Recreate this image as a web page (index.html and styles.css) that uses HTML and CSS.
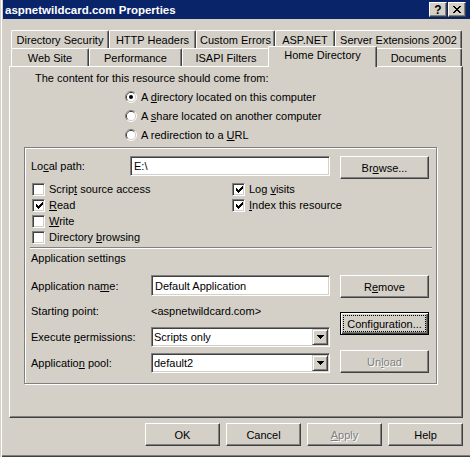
FILE: index.html
```html
<!DOCTYPE html>
<html>
<head>
<meta charset="utf-8">
<title>aspnetwildcard.com Properties</title>
<link rel="stylesheet" href="styles.css">
</head>
<body>
<div class="window">
  <div class="titlebar">
    <span class="title">aspnetwildcard.com Properties</span>
    <div class="caption-btns">
      <span class="cap-btn cap-help">?</span>
      <span class="cap-btn">
        <svg width="8" height="7" viewBox="0 0 8 7" shape-rendering="crispEdges"><path d="M0 0h2v1h-2zM6 0h2v1h-2zM1 1h2v1h-2zM5 1h2v1h-2zM2 2h4v1h-4zM3 3h2v1h-2zM2 4h4v1h-4zM1 5h2v1h-2zM5 5h2v1h-2zM0 6h2v1h-2zM6 6h2v1h-2z" fill="#000"/></svg>
      </span>
    </div>
  </div>

  <div class="tabs">
    <div class="tab-row">
      <div class="tab w-ds">Directory Security</div>
      <div class="tab w-http">HTTP Headers</div>
      <div class="tab w-err">Custom Errors</div>
      <div class="tab w-asp">ASP.NET</div>
      <div class="tab w-ext">Server Extensions 2002</div>
    </div>
    <div class="tab-row">
      <div class="tab w-web">Web Site</div>
      <div class="tab w-perf">Performance</div>
      <div class="tab w-isapi">ISAPI Filters</div>
      <div class="tab tab-selected w-home">Home Directory</div>
      <div class="tab w-docs">Documents</div>
    </div>
  </div>

  <div class="panel">
    <div class="intro">The content for this resource should come from:</div>
    <div class="radios">
      <div class="radio-row">
        <svg class="radio" width="12" height="12" viewBox="0 0 12 12"><path d="M2.11 9.89A5.5 5.5 0 0 1 9.89 2.11" fill="none" stroke="#808080"/><path d="M9.89 2.11A5.5 5.5 0 0 1 2.11 9.89" fill="none" stroke="#fff"/><path d="M2.82 9.18A4.5 4.5 0 0 1 9.18 2.82" fill="none" stroke="#404040"/><path d="M9.18 2.82A4.5 4.5 0 0 1 2.82 9.18" fill="none" stroke="#d4d0c8"/><circle cx="6" cy="6" r="4" fill="#fff"/><circle cx="6" cy="6" r="2" fill="#000"/></svg>
        <span>A <u>d</u>irectory located on this computer</span>
      </div>
      <div class="radio-row">
        <svg class="radio" width="12" height="12" viewBox="0 0 12 12"><path d="M2.11 9.89A5.5 5.5 0 0 1 9.89 2.11" fill="none" stroke="#808080"/><path d="M9.89 2.11A5.5 5.5 0 0 1 2.11 9.89" fill="none" stroke="#fff"/><path d="M2.82 9.18A4.5 4.5 0 0 1 9.18 2.82" fill="none" stroke="#404040"/><path d="M9.18 2.82A4.5 4.5 0 0 1 2.82 9.18" fill="none" stroke="#d4d0c8"/><circle cx="6" cy="6" r="4" fill="#fff"/></svg>
        <span>A <u>s</u>hare located on another computer</span>
      </div>
      <div class="radio-row">
        <svg class="radio" width="12" height="12" viewBox="0 0 12 12"><path d="M2.11 9.89A5.5 5.5 0 0 1 9.89 2.11" fill="none" stroke="#808080"/><path d="M9.89 2.11A5.5 5.5 0 0 1 2.11 9.89" fill="none" stroke="#fff"/><path d="M2.82 9.18A4.5 4.5 0 0 1 9.18 2.82" fill="none" stroke="#404040"/><path d="M9.18 2.82A4.5 4.5 0 0 1 2.82 9.18" fill="none" stroke="#d4d0c8"/><circle cx="6" cy="6" r="4" fill="#fff"/></svg>
        <span>A redirection to a <u>U</u>RL</span>
      </div>
    </div>

    <div class="group">
      <div class="path-row">
        <span class="lbl-path">Lo<u>c</u>al path:</span>
        <div class="edit path-edit">E:\</div>
        <div class="btn side-btn">Br<u>o</u>wse...</div>
      </div>

      <div class="checks">
        <div class="check"><span class="cb"></span><span>Scrip<u>t</u> source access</span></div>
        <div class="check"><span class="cb"><svg width="7" height="7" viewBox="0 0 7 7" shape-rendering="crispEdges"><path d="M0 2h1v3h-1zM1 3h1v3h-1zM2 4h1v3h-1zM3 3h1v3h-1zM4 2h1v3h-1zM5 1h1v3h-1zM6 0h1v3h-1z" fill="#000"/></svg></span><span>Log <u>v</u>isits</span></div>
        <div class="check"><span class="cb"><svg width="7" height="7" viewBox="0 0 7 7" shape-rendering="crispEdges"><path d="M0 2h1v3h-1zM1 3h1v3h-1zM2 4h1v3h-1zM3 3h1v3h-1zM4 2h1v3h-1zM5 1h1v3h-1zM6 0h1v3h-1z" fill="#000"/></svg></span><span><u>R</u>ead</span></div>
        <div class="check"><span class="cb"><svg width="7" height="7" viewBox="0 0 7 7" shape-rendering="crispEdges"><path d="M0 2h1v3h-1zM1 3h1v3h-1zM2 4h1v3h-1zM3 3h1v3h-1zM4 2h1v3h-1zM5 1h1v3h-1zM6 0h1v3h-1z" fill="#000"/></svg></span><span><u>I</u>ndex this resource</span></div>
        <div class="check"><span class="cb"></span><span><u>W</u>rite</span></div>
        <div></div>
        <div class="check"><span class="cb"></span><span>Directory <u>b</u>rowsing</span></div>
      </div>

      <div class="sep"></div>
      <div class="app-title">Application settings</div>

      <div class="app">
        <div class="app-fields">
          <div class="field-row r-name">
            <span class="lbl">Application na<u>m</u>e:</span>
            <div class="edit app-edit">Default Application</div>
          </div>
          <div class="field-row r-start">
            <span class="lbl">Starting point:</span>
            <span class="value">&lt;aspnetwildcard.com&gt;</span>
          </div>
          <div class="field-row r-exec">
            <span class="lbl">Execute <u>p</u>ermissions:</span>
            <div class="combo"><span class="combo-text">Scripts only</span><span class="drop"><svg width="7" height="4" viewBox="0 0 7 4" shape-rendering="crispEdges"><path d="M0 0h7v1h-1v1h-1v1h-1v1h-1v-1h-1v-1h-1v-1h-1z" fill="#000"/></svg></span></div>
          </div>
          <div class="field-row r-pool">
            <span class="lbl">Applicatio<u>n</u> pool:</span>
            <div class="combo"><span class="combo-text">default2</span><span class="drop"><svg width="7" height="4" viewBox="0 0 7 4" shape-rendering="crispEdges"><path d="M0 0h7v1h-1v1h-1v1h-1v1h-1v-1h-1v-1h-1v-1h-1z" fill="#000"/></svg></span></div>
          </div>
        </div>
        <div class="app-btns">
          <div class="btn side-btn">R<u>e</u>move</div>
          <div class="btn side-btn btn-default btn-config"><span class="focus">Confi<u>g</u>uration...</span></div>
          <div class="btn side-btn btn-disabled btn-unload">Un<u>l</u>oad</div>
        </div>
      </div>
    </div>
  </div>

  <div class="footer">
    <div class="btn foot-btn">OK</div>
    <div class="btn foot-btn">Cancel</div>
    <div class="btn foot-btn btn-disabled"><span><u>A</u>pply</span></div>
    <div class="btn foot-btn">Help</div>
  </div>
</div>
</body>
</html>
```

FILE: styles.css
```css
html, body {
  margin: 0;
  padding: 0;
  background: #d4d0c8;
}

body {
  font-family: "Liberation Sans", Arial, sans-serif;
  font-size: 11px;
  color: #000;
}

u {
  text-decoration: underline;
  text-underline-offset: 1px;
}

.window {
  width: 470px;
  height: 457px;
  box-sizing: border-box;
  background: #d4d0c8;
  display: flex;
  flex-direction: column;
  overflow: hidden;
  box-shadow: inset 1px 0 0 #d4d0c8, inset 2px 0 0 #fff, inset 0 -1px 0 #404040, inset 0 -2px 0 #808080;
}

/* Title bar */
.titlebar {
  height: 19px;
  flex: none;
  margin-left: 3px;
  padding-left: 2px;
  background: #0a246a;
  display: flex;
  align-items: center;
  color: #fff;
}

.title {
  font-weight: bold;
  font-size: 11.5px;
  white-space: nowrap;
}

.caption-btns {
  margin-left: auto;
  margin-right: 4px;
  display: flex;
  gap: 1px;
}

.cap-btn {
  width: 18px;
  height: 15px;
  box-sizing: border-box;
  background: #d4d0c8;
  border: 1px solid;
  border-color: #fff #404040 #404040 #fff;
  box-shadow: inset -1px -1px 0 #808080;
  display: flex;
  align-items: center;
  justify-content: center;
  color: #000;
}

.cap-help {
  font-weight: bold;
  font-size: 12px;
  line-height: 12px;
}

/* Tabs */
.tabs {
  flex: none;
  margin-top: 11px;
  padding-left: 11px;
}

.tab-row {
  display: flex;
  height: 18px;
}

.tab {
  box-sizing: border-box;
  height: 18px;
  flex: none;
  border-left: 1px solid #fff;
  border-top: 1px solid #fff;
  border-right: 1px solid #404040;
  border-radius: 2px 2px 0 0;
  box-shadow: inset -1px 0 0 #808080;
  background: #d4d0c8;
  text-align: center;
  line-height: 18px;
  white-space: nowrap;
}

.w-ds { width: 98px; }
.w-http { width: 87px; }
.w-err { width: 79px; }
.w-asp { width: 60px; }
.w-ext { width: 127px; }

.w-web { width: 78px; }
.w-perf { width: 93px; }
.w-isapi { width: 88px; }
.w-home { width: 105px; }
.w-docs { width: 87px; }

.tab-selected {
  position: relative;
  z-index: 2;
  width: 109px;
  height: 21px;
  margin: -2px -2px -1px;
  line-height: 17px;
}

/* Panel */
.panel {
  flex: none;
  margin-left: 9px;
  width: 454px;
  height: 352px;
  box-sizing: border-box;
  border-top: 1px solid #fff;
  border-left: 1px solid #fff;
  border-right: 1px solid #404040;
  border-bottom: 1px solid #404040;
  box-shadow: inset -1px -1px 0 #808080;
  display: flex;
  flex-direction: column;
}

.intro {
  margin: 5px 0 0 25px;
  line-height: 13px;
}

.radios {
  margin: 2px 0 0 115px;
}

.radio-row {
  display: flex;
  align-items: center;
  height: 19px;
}

.radio {
  flex: none;
  margin-right: 4px;
}

/* Group box */
.group {
  margin: 3px 0 0 14px;
  width: 413px;
  height: 237px;
  box-sizing: border-box;
  border: 1px solid #808080;
  box-shadow: inset 1px 1px 0 #fff, 1px 1px 0 #fff;
}

.path-row {
  display: flex;
  margin: 8px 0 0 6px;
  height: 23px;
}

.lbl-path {
  width: 99px;
  line-height: 20px;
}

.edit {
  box-sizing: border-box;
  background: #fff;
  border: 1px solid;
  border-color: #808080 #fff #fff #808080;
  box-shadow: inset 1px 1px 0 #404040, inset -1px -1px 0 #d4d0c8;
  padding-left: 3px;
  display: flex;
  align-items: center;
  white-space: nowrap;
}

.path-edit {
  width: 200px;
  height: 20px;
  margin-right: 10px;
}

.btn {
  box-sizing: border-box;
  background: #d4d0c8;
  border: 1px solid;
  border-color: #fff #404040 #404040 #fff;
  box-shadow: inset -1px -1px 0 #808080;
  display: flex;
  align-items: center;
  justify-content: center;
  white-space: nowrap;
}

.side-btn {
  width: 89px;
  height: 23px;
  flex: none;
}

.btn-default {
  border-color: #000;
  box-shadow: inset 1px 1px 0 #fff, inset -1px -1px 0 #404040, inset -2px -2px 0 #808080;
}

.focus {
  flex: 1;
  align-self: stretch;
  margin: 2px;
  border: 1px dotted #000;
  display: flex;
  align-items: center;
  justify-content: center;
}

.btn-disabled {
  color: #808080;
  text-shadow: 1px 1px 0 #fff;
}

.checks {
  display: grid;
  grid-template-columns: 200px 200px;
  grid-auto-rows: 16px;
  margin: 2px 0 0 7px;
}

.check {
  display: flex;
  align-items: center;
  white-space: nowrap;
}

.cb {
  width: 13px;
  height: 13px;
  box-sizing: border-box;
  flex: none;
  background: #fff;
  border: 1px solid;
  border-color: #808080 #fff #fff #808080;
  box-shadow: inset 1px 1px 0 #404040, inset -1px -1px 0 #d4d0c8;
  margin-right: 4px;
  display: flex;
  align-items: center;
  justify-content: center;
}

.cb svg {
  display: block;
  margin: 1px 0 0 1px;
}

.sep {
  margin: 2px 0 0 5px;
  width: 402px;
  height: 1px;
  background: #808080;
  border-bottom: 1px solid #fff;
}

.app-title {
  margin: 3px 0 0 6px;
  line-height: 13px;
}

.app {
  display: flex;
  margin: 10px 0 0 6px;
}

.app-fields {
  width: 299px;
  margin-right: 10px;
}

.field-row {
  display: flex;
  align-items: center;
}

.lbl {
  width: 120px;
  flex: none;
  white-space: nowrap;
}

.r-name {
  height: 21px;
}

.app-edit {
  width: 179px;
  height: 21px;
}

.r-start {
  margin-top: 8px;
  height: 13px;
}

.value {
  white-space: nowrap;
}

.r-exec {
  margin-top: 10px;
  height: 20px;
}

.r-pool {
  margin-top: 6px;
  height: 20px;
}

.combo {
  width: 179px;
  height: 20px;
  box-sizing: border-box;
  background: #fff;
  border: 1px solid;
  border-color: #808080 #fff #fff #808080;
  box-shadow: inset 1px 1px 0 #404040, inset -1px -1px 0 #d4d0c8;
  padding: 1px;
  display: flex;
  align-items: center;
}

.combo-text {
  padding-left: 1px;
  white-space: nowrap;
}

.drop {
  margin-left: auto;
  width: 16px;
  height: 16px;
  box-sizing: border-box;
  background: #d4d0c8;
  border: 1px solid;
  border-color: #d4d0c8 #404040 #404040 #d4d0c8;
  box-shadow: inset 1px 1px 0 #fff, inset -1px -1px 0 #808080;
  display: flex;
  align-items: center;
  justify-content: center;
}

.drop svg {
  display: block;
}

.app-btns {
  display: flex;
  flex-direction: column;
}

.btn-config {
  margin-top: 14px;
}

.btn-unload {
  margin-top: 15px;
}

/* Footer */
.footer {
  flex: none;
  display: flex;
  justify-content: flex-end;
  gap: 6px;
  margin-top: 5px;
  padding-right: 7px;
}

.foot-btn {
  width: 75px;
  height: 23px;
}
```
